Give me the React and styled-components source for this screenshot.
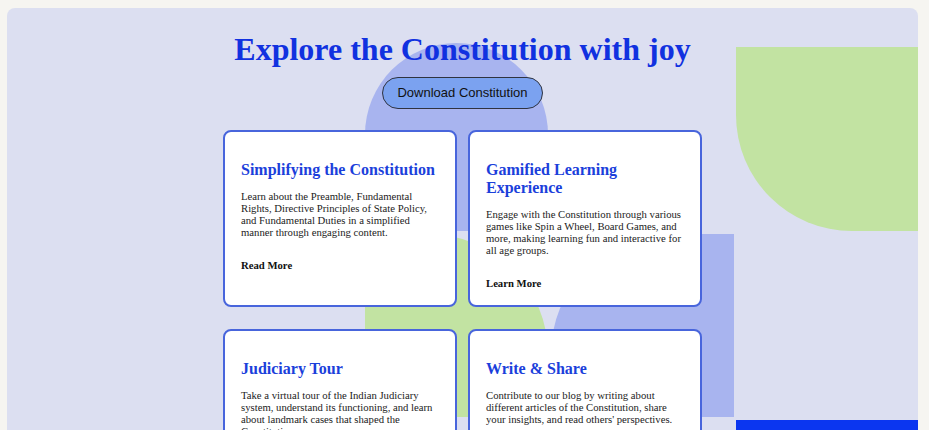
import React from 'react';
import styled, { createGlobalStyle } from "styled-components";

const GlobalStyle = createGlobalStyle`
body {
    margin: 0;
    background: #f6f5f1;
    font-family: "Liberation Serif", "Times New Roman", serif;
}
`;

const Panel = styled.div`
position: relative;
overflow: hidden;
margin: 8px 11px 0 7px;
min-height: 560px;
border-radius: 8px;
background: #dcdff1;
`;

// decorative blocks sitting behind the content
const Decor = styled.div`
position: absolute;
top: 39px;
left: 358px;
display: grid;
grid-template-columns: repeat(3, 183px);
grid-template-rows: repeat(3, 183.5px);
gap: 3px 2.5px;
z-index: 0;
`;
const Shape = styled.div`
grid-column: ${props => props.col};
grid-row: ${props => props.row};
align-self: end;
height: ${props => props.tall ? "188px" : "100%"};
background: ${props => props.color};
border-radius: ${props => props.radius || "0"};
`;

const Content = styled.div`
position: relative;
z-index: 1;
display: flex;
flex-direction: column;
align-items: center;
`;

const Title = styled.h1`
margin: 23px 0 9px;
font-family: "Liberation Serif", "Times New Roman", serif;
font-size: 32px;
font-weight: 700;
line-height: normal;
color: #1131e0;
`;

const DownloadButton = styled.button`
padding: 7px 14.5px;
border: 1px solid #2f3340;
border-radius: 16px;
background: #7ba2f0;
font-family: "Liberation Sans", Arial, sans-serif;
font-size: 13px;
line-height: 16px;
color: #111;
cursor: pointer;
`;

const CardGrid = styled.div`
display: grid;
grid-template-columns: repeat(2, 234px);
gap: 22px 11px;
margin-top: 21px;
`;

const Card = styled.div`
box-sizing: border-box;
padding: 13.5px 16px 16.5px;
border: 2px solid #4865dc;
border-radius: 8px;
background: #fff;
`;

const CardTitle = styled.h3`
margin: 15px 0 11px;
font-size: 16px;
font-weight: 700;
line-height: normal;
color: #1b3fdb;
`;

const CardText = styled.p`
margin: 0;
font-size: 10.7px;
line-height: normal;
color: #222;
`;

const CardLink = styled.a`
display: block;
margin-top: 21px;
font-size: 10.7px;
font-weight: 700;
line-height: normal;
color: #111;
text-decoration: none;
`;

const features = [
    {
        title: "Simplifying the Constitution",
        text: "Learn about the Preamble, Fundamental Rights, Directive Principles of State Policy, and Fundamental Duties in a simplified manner through engaging content.",
        link: "Read More"
    },
    {
        title: "Gamified Learning Experience",
        text: "Engage with the Constitution through various games like Spin a Wheel, Board Games, and more, making learning fun and interactive for all age groups.",
        link: "Learn More"
    },
    {
        title: "Judiciary Tour",
        text: "Take a virtual tour of the Indian Judiciary system, understand its functioning, and learn about landmark cases that shaped the Constitution.",
        link: "Take Tour"
    },
    {
        title: "Write & Share",
        text: "Contribute to our blog by writing about different articles of the Constitution, share your insights, and read others' perspectives.",
        link: "Start Writing"
    }
];

export default function App() {
    return (
        <>
            <GlobalStyle/>
            <Panel>
                <Decor>
                    <Shape col={1} row={1} tall color="#a8b4ef" radius="91.5px 91.5px 0 0"/>
                    <Shape col={3} row={1} color="#c2e3a2" radius="0 0 0 116px"/>
                    <Shape col={1} row={2} color="#c2e3a2" radius="0 120px 0 0"/>
                    <Shape col={2} row={2} color="#a8b4ef" radius="120px 0 0 0"/>
                    <Shape col={3} row={3} color="#0b36f0"/>
                </Decor>
                <Content>
                    <Title>Explore the Constitution with joy</Title>
                    <DownloadButton>Download Constitution</DownloadButton>
                    <CardGrid>
                        {features.map(item => (
                            <Card key={item.title}>
                                <CardTitle>{item.title}</CardTitle>
                                <CardText>{item.text}</CardText>
                                <CardLink href="#">{item.link}</CardLink>
                            </Card>
                        ))}
                    </CardGrid>
                </Content>
            </Panel>
        </>
    );
}
